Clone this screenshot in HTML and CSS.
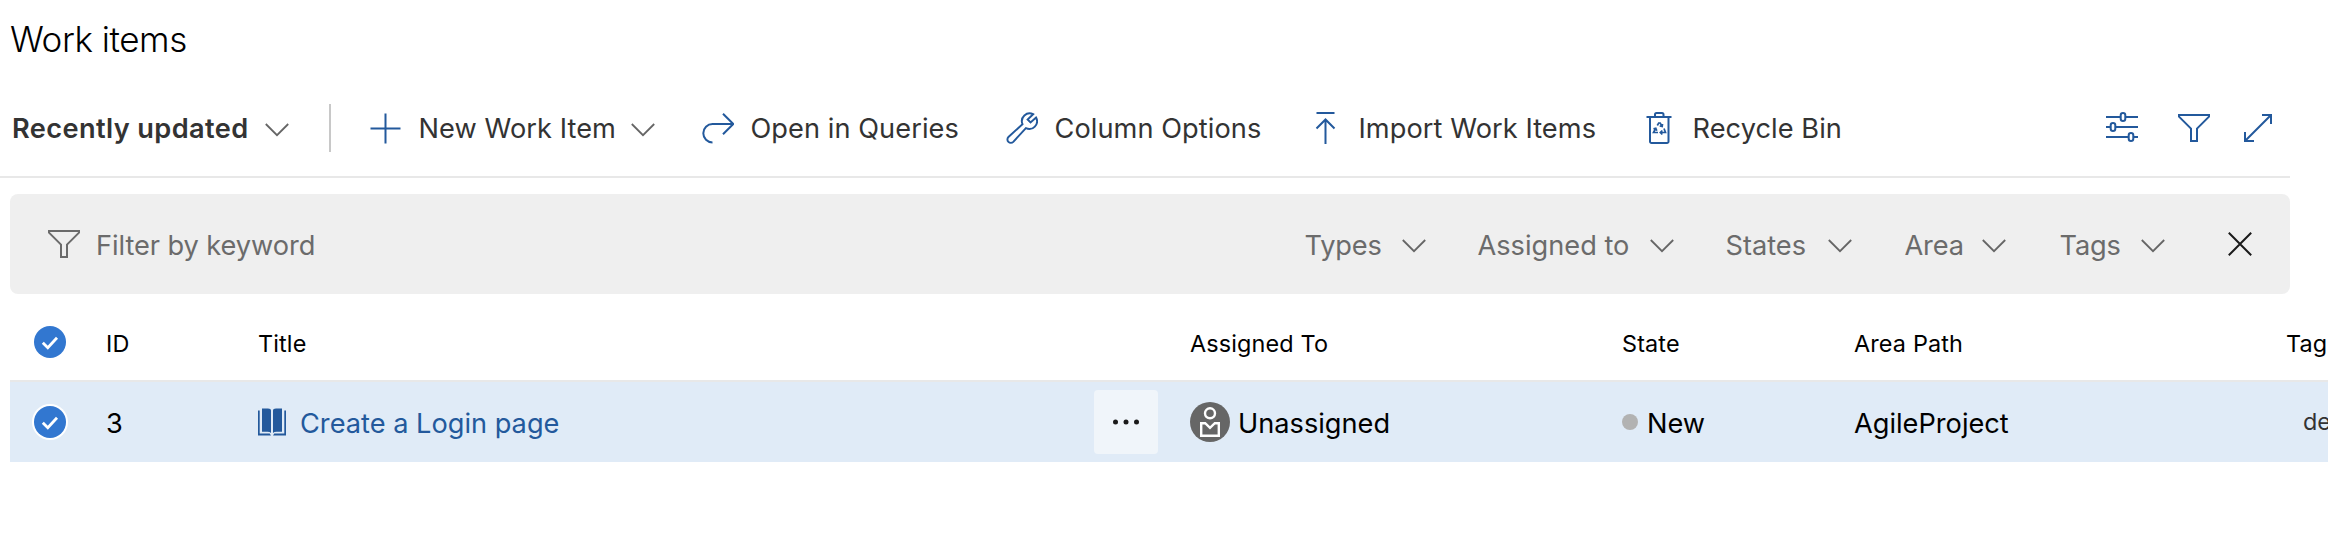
FILE: index.html
```html
<!DOCTYPE html>
<html lang="en">
<head>
<meta charset="utf-8">
<title>Work items</title>
<link rel="stylesheet" href="styles.css">
</head>
<body>
<svg class="defs" width="0" height="0" aria-hidden="true">
  <symbol id="chevron" viewBox="0 0 24 14"><path d="M.8 1 12 12.2 23.2 1"/></symbol>
  <symbol id="funnel" viewBox="0 0 32 28"><path d="M1 1h30v1.6L19 14.6V27h-6V14.6L1 2.6z"/></symbol>
  <symbol id="check" viewBox="0 0 36 36"><circle cx="18" cy="18" r="18" fill="#fff"/><circle cx="18" cy="18" r="16" fill="#3277d0"/><path d="m10.8 18.7 5 5 9.2-10" fill="none" stroke="#fff" stroke-width="2.8"/></symbol>
</svg>

<h1 class="title"><span class="t">Work items</span></h1>

<div class="toolbar">
  <button class="view"><span class="t t-view">Recently updated</span><svg class="chev"><use href="#chevron"/></svg></button>
  <span class="divider"></span>
  <button class="cmd cmd-new">
    <svg class="ico" viewBox="0 0 32 32"><path d="M15.500 1.500v30M.5 16.500h30"/></svg>
    <span class="t t-new">New Work Item</span><svg class="chev"><use href="#chevron"/></svg>
  </button>
  <button class="cmd cmd-open">
    <svg class="ico" viewBox="0 0 32 32"><path d="M21 1.700 31.300 12 21 22.300M31 12H10.500a9.200 9.200 0 0 0 0 18.400"/></svg>
    <span class="t">Open in Queries</span>
  </button>
  <button class="cmd cmd-col">
    <svg class="ico" viewBox="0 0 33 32"><path d="M28 1.800A8 8 0 0 0 17 12L2.500 25.300a3.500 3.500 0 0 0 5 5L20.500 16.200A8 8 0 0 0 31 5.200l-5.700 5-3-3z"/></svg>
    <span class="t">Column Options</span>
  </button>
  <button class="cmd cmd-imp">
    <svg class="ico" viewBox="0 0 32 32"><path d="M6.500 1h18M15.500 32V7.500M6.500 16.500l9-9 9 9"/></svg>
    <span class="t">Import Work Items</span>
  </button>
  <button class="cmd cmd-bin">
    <svg class="ico" viewBox="0 0 32 32"><path d="M2.500 5h25M11 5V2.500A1.500 1.500 0 0 1 12.500 1h5.500a1.500 1.500 0 0 1 1.500 1.500V5M6 5v24.500A1.500 1.500 0 0 0 7.500 31h15.500a1.500 1.500 0 0 0 1.500-1.500V5"/><path stroke-width="1.700" d="m13.300 13.500 1.400-2.500h1.500l2 3.500m.3-2.500-.3 2.500-2.500-.5M20 16.500l1.500 4h-5m1.800-2-2 2 2 2M14 20.500H9.500l2.300-4.300m-2.300.7 2.300-.7 1 2.500"/></svg>
    <span class="t">Recycle Bin</span>
  </button>
  <div class="tools">
    <svg class="ico" viewBox="0 0 32 32"><path d="M0 5h14.200M20 5h12M0 15h4M10 15h22M0 25h22M28 25h4"/><rect x="14.700" y="1" width="4.600" height="8" rx="2.300"/><rect x="4.700" y="11" width="4.600" height="8" rx="2.300"/><rect x="22.700" y="21" width="4.600" height="8" rx="2.300"/></svg>
    <svg class="fun fun-blue"><use href="#funnel"/></svg>
    <svg class="exp" viewBox="0 0 28 28"><path d="M1.500 26.500l25-25M18 1h9v9M1 18v9h9"/></svg>
  </div>
</div>

<div class="filterbar">
  <svg class="fun"><use href="#funnel"/></svg>
  <span class="t t-key">Filter by keyword</span>
  <button class="facet f-types"><span class="t">Types</span><svg class="chev"><use href="#chevron"/></svg></button>
  <button class="facet f-assigned"><span class="t">Assigned to</span><svg class="chev"><use href="#chevron"/></svg></button>
  <button class="facet f-states"><span class="t">States</span><svg class="chev"><use href="#chevron"/></svg></button>
  <button class="facet f-area"><span class="t">Area</span><svg class="chev"><use href="#chevron"/></svg></button>
  <button class="facet f-tags"><span class="t">Tags</span><svg class="chev"><use href="#chevron"/></svg></button>
  <svg class="close" viewBox="0 0 24 24"><path d="M.8.8l22.400 22.400M23.200.8L.8 23.200"/></svg>
</div>

<div class="grid head">
  <svg class="check"><use href="#check"/></svg>
  <span class="t">ID</span>
  <span class="t">Title</span>
  <span></span>
  <span class="t">Assigned To</span>
  <span class="t">State</span>
  <span class="t">Area Path</span>
  <span class="t">Tag</span>
</div>
<div class="grid row">
  <svg class="check"><use href="#check"/></svg>
  <span class="t">3</span>
  <a class="link"><svg class="book" viewBox="0 0 28 28"><path d="M0 2.500h1.700V25.500h10l1.300 2H0zM28 2.500h-1.700V25.500h-10l-1.300 2h13z"/><path d="M4 .5h6Q13 .5 13 2.500V25q-1-1.300-3.500-1.300H4zM24 .5h-6Q15 .5 15 2.500V25q1-1.300 3.500-1.300H24z"/></svg><span class="t">Create a Login page</span></a>
  <button class="more"><svg viewBox="0 0 28 6"><circle cx="3.500" cy="3" r="2.500"/><circle cx="14" cy="3" r="2.500"/><circle cx="24.500" cy="3" r="2.500"/></svg></button>
  <span class="who"><svg class="avatar" viewBox="0 0 40 40"><circle cx="20" cy="20" r="20" fill="#666"/><g fill="none" stroke="#fff" stroke-width="2.400"><circle cx="20" cy="11.300" r="5"/><path d="M11.200 33.800V21.200h4l4.800 4.600 4.800-4.600h4v12.600z"/></g></svg><span class="t">Unassigned</span></span>
  <span class="state"><i class="dot"></i><span class="t">New</span></span>
  <span class="t">AgileProject</span>
  <span class="tag"><span class="t">de</span></span>
</div>
</body>
</html>
```
FILE: styles.css
```css
* { box-sizing: border-box; }
body {
  margin: 0;
  width: 2328px;
  height: 546px;
  overflow: hidden;
  background: #fff;
  color: #000;
  font-family: Inter, "Liberation Sans", sans-serif;
  font-size: 27.2px;
}
button { margin: 0; padding: 0; border: 0; background: none; font: inherit; letter-spacing: inherit; color: inherit; display: flex; align-items: center; text-align: left; }
svg { display: block; flex: none; fill: none; }
.defs { position: absolute; }
.t { white-space: nowrap; line-height: 34px; flex: none; padding-top: 2px; }

.title { margin: 0; height: 80px; padding: 19px 0 0 10px; font-size: 35px; font-weight: 300; line-height: 40px; letter-spacing: -0.45px; }
.title .t { line-height: 40px; }

.toolbar { display: flex; align-items: center; width: 2290px; height: 98px; border-bottom: 2px solid #e8e8e8; padding-left: 11px; color: #333; letter-spacing: 0.06px; }
.view { width: 318px; font-weight: 600; letter-spacing: 0.38px; }
.view .t { width: 253.5px; padding-left: 1px; }
.chev { width: 24px; height: 14px; margin-top: 3px; stroke: #666; stroke-width: 1.8; }
.divider { width: 2px; height: 48px; background: #c8c8c8; }
.ico { width: 32px; height: 32px; stroke: #23599c; stroke-width: 2; }
.cmd .t { margin-left: 16.5px; }
.cmd-new { padding-left: 39px; width: 371px; }
.cmd-new .t { width: 212.5px; }
.cmd-open { width: 304px; }
.cmd-col { width: 304px; }
.cmd-imp { width: 334px; }
.tools { margin-left: auto; display: flex; align-items: center; padding-right: 18px; }
.fun { width: 32px; height: 28px; stroke: #6b6b6b; stroke-width: 2; }
.fun-blue { stroke: #23599c; margin: 0 34px 0 40px; }
.exp { width: 28px; height: 28px; stroke: #23599c; stroke-width: 2; }

.filterbar { display: flex; align-items: center; margin: 16px 0 0 10px; width: 2280px; height: 100px; border-radius: 8px; background: #efefef; padding: 0 38px; color: #6b6b6b; }
.filterbar .t, .grid .t { padding-top: 4px; }
.t-key { margin: 0 auto 0 16px; letter-spacing: -0.07px; }
.facet { justify-content: space-between; letter-spacing: -0.15px; }
.f-types { width: 121px; margin-right: 52px; }
.f-assigned { width: 196px; margin-right: 52px; letter-spacing: 0; }
.f-states { width: 126px; margin-right: 53px; letter-spacing: 0; }
.f-area { width: 101px; margin-right: 54px; }
.f-tags { width: 105px; margin-right: 63.5px; }
.close { width: 24px; height: 24px; stroke: #1a1a1a; stroke-width: 2; }

.grid { display: grid; grid-template-columns: 96px 152px 836px 96px 432px 232px 432px 42px; align-items: center; margin-left: 10px; width: 2318px; overflow: hidden; }
.check { width: 36px; height: 36px; margin-left: 22px; }
.head { height: 86px; font-size: 23.4px; padding-top: 9px; letter-spacing: 0.15px; }
.row { height: 82px; background: #e0ebf7; border-top: 2px solid #e8e8e8; }
.link { display: flex; align-items: center; color: #23599c; }
.book { width: 28px; height: 28px; margin: 0 14px 0 0; fill: #23599c; }
.more { width: 64px; height: 64px; border-radius: 4px; background: #f0f5fa; justify-content: center; }
.more svg { width: 28px; height: 6px; fill: #1a1a1a; }
.who, .state { display: flex; align-items: center; }
.avatar { width: 40px; height: 40px; margin-right: 8px; }
.dot { width: 16px; height: 16px; border-radius: 50%; background: #b2b2b2; margin-right: 9px; }
.tag { padding-left: 17px; font-size: 23.4px; color: #333; }
```
